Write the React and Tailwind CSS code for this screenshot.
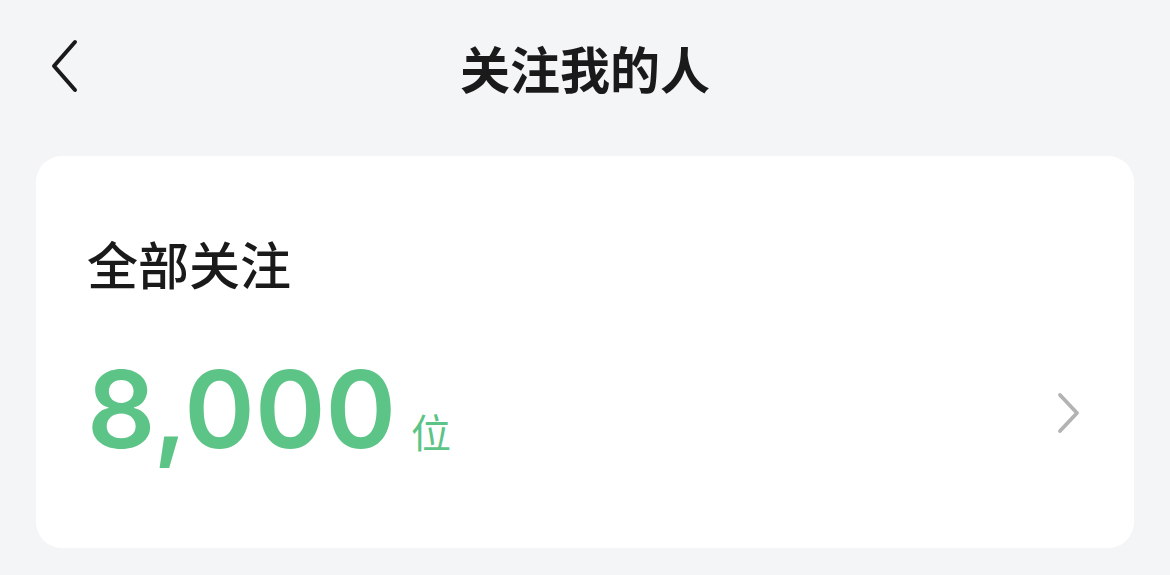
import React from 'react';

const font = { fontFamily: '"Noto Sans CJK SC", "Noto Sans", sans-serif' };

const App = () => {
  return (
    <div className="w-[1170px] h-[575px] bg-[#f4f5f7] overflow-hidden" style={font}>
      <header className="relative h-[134px] flex items-center justify-center">
        <button className="absolute left-[50px] top-[39px] w-[28px] h-[54px] flex items-center justify-center">
          <svg width="28" height="54" viewBox="0 0 28 54" fill="none">
            <path d="M25 3 L4 27 L25 51" stroke="#1a1a1a" strokeWidth="4" strokeLinecap="round" strokeLinejoin="round" />
          </svg>
        </button>
        <h1 className="text-[50px] font-bold text-[#1a1a1a] leading-none">关注我的人</h1>
      </header>

      <div className="mx-[36px] mt-[22px] h-[392px] bg-white rounded-[26px] pl-[51px] pr-[52px] pt-[82px]">
        <h2 className="text-[51px] font-medium text-[#1a1a1a] leading-none">全部关注</h2>
        <div className="mt-[67px] flex items-center justify-between">
          <div className="flex items-baseline">
            <span className="text-[107px] font-semibold text-[#5cc486] leading-none" style={{ fontFamily: 'Inter, sans-serif' }}>8,000</span>
            <span className="ml-[15px] text-[40px] text-[#5cc486] leading-none">位</span>
          </div>
          <svg width="26" height="42" viewBox="0 0 26 42" fill="none" className="mt-[6px]">
            <path d="M4 3 L21 21 L4 39" stroke="#b3b3b3" strokeWidth="3.8" strokeLinecap="round" strokeLinejoin="round" />
          </svg>
        </div>
      </div>
    </div>
  );
};

export default App;
